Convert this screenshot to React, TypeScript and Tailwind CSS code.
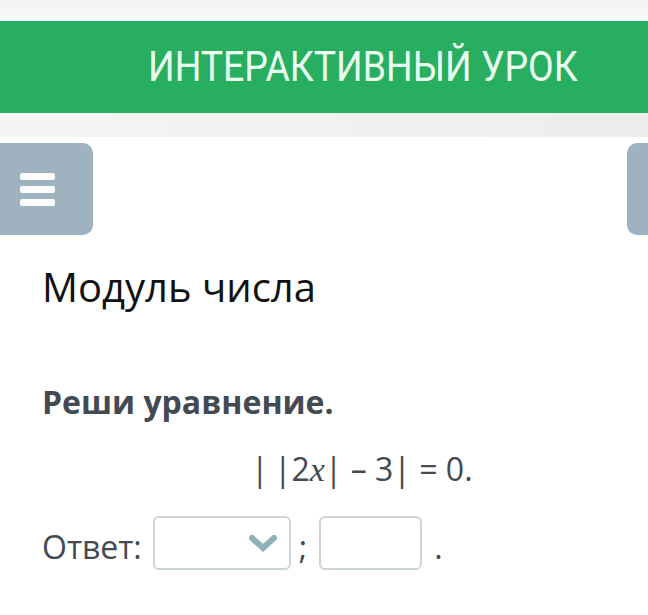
import React from "react";

export default function App() {
  return (
    <div className="w-[648px] h-[615px] bg-white overflow-hidden" style={{ fontFamily: "'Open Sans', sans-serif" }}>
      <div className="h-[21px] bg-gradient-to-b from-[#f3f3f3] to-[#fbfbfb]" />
      <div className="h-[92px] bg-[#28ae60] flex items-center pl-[148px]">
        <span className="inline-block origin-left scale-x-[0.89] whitespace-nowrap text-[#eafff0] text-[42px] leading-none" style={{ fontFamily: "Roboto, sans-serif" }}>
          ИНТЕРАКТИВНЫЙ УРОК
        </span>
      </div>
      <div className="h-[24px] bg-gradient-to-r from-[#f4f5f5] to-[#eceeee]" />
      <div className="flex justify-between pt-[6px]">
        <div className="w-[93px] h-[92px] bg-[#9eb3bf] rounded-r-[10px] flex flex-col justify-center gap-[6px] pl-[20px]">
          <div className="w-[35px] h-[7px] bg-white rounded-[2px]" />
          <div className="w-[35px] h-[7px] bg-white rounded-[2px]" />
          <div className="w-[35px] h-[7px] bg-white rounded-[2px]" />
        </div>
        <div className="w-[21px] h-[92px] bg-[#9eb3bf] rounded-l-[10px]" />
      </div>
      <div className="pl-[42px] pt-[25px]">
        <div className="text-[40px] leading-[54px] text-[#111]">Модуль числа</div>
        <div className="mt-[68px] text-[32px] leading-[40px] font-bold text-[#434a52]">Реши уравнение.</div>
        <div className="mt-[27px] pl-[209px] text-[32px] leading-[40px] text-[#444a50]">
          |&thinsp;|2<span className="italic text-[34px]" style={{ fontFamily: "'Liberation Serif', serif" }}>x</span>| – 3| = 0.
        </div>
        <div className="mt-[26px] flex items-start text-[32px] leading-[40px] text-[#444a50]">
          <span className="mt-[11px]">Ответ:</span>
          <div className="ml-[11px] w-[138px] h-[54px] border-2 border-[#cdd6d6] rounded-[6px] flex items-center justify-end pr-[12px]">
            <svg width="28" height="18" viewBox="0 0 28 18">
              <path d="M3 4 L14 14 L25 4" fill="none" stroke="#8fb1b6" strokeWidth="6" strokeLinecap="round" />
            </svg>
          </div>
          <span className="ml-[8px] mr-[12px] mt-[11px]">;</span>
          <div className="w-[103px] h-[54px] border-2 border-[#cdd6d6] rounded-[6px]" />
          <span className="ml-[12px] mt-[11px]">.</span>
        </div>
      </div>
    </div>
  );
}
